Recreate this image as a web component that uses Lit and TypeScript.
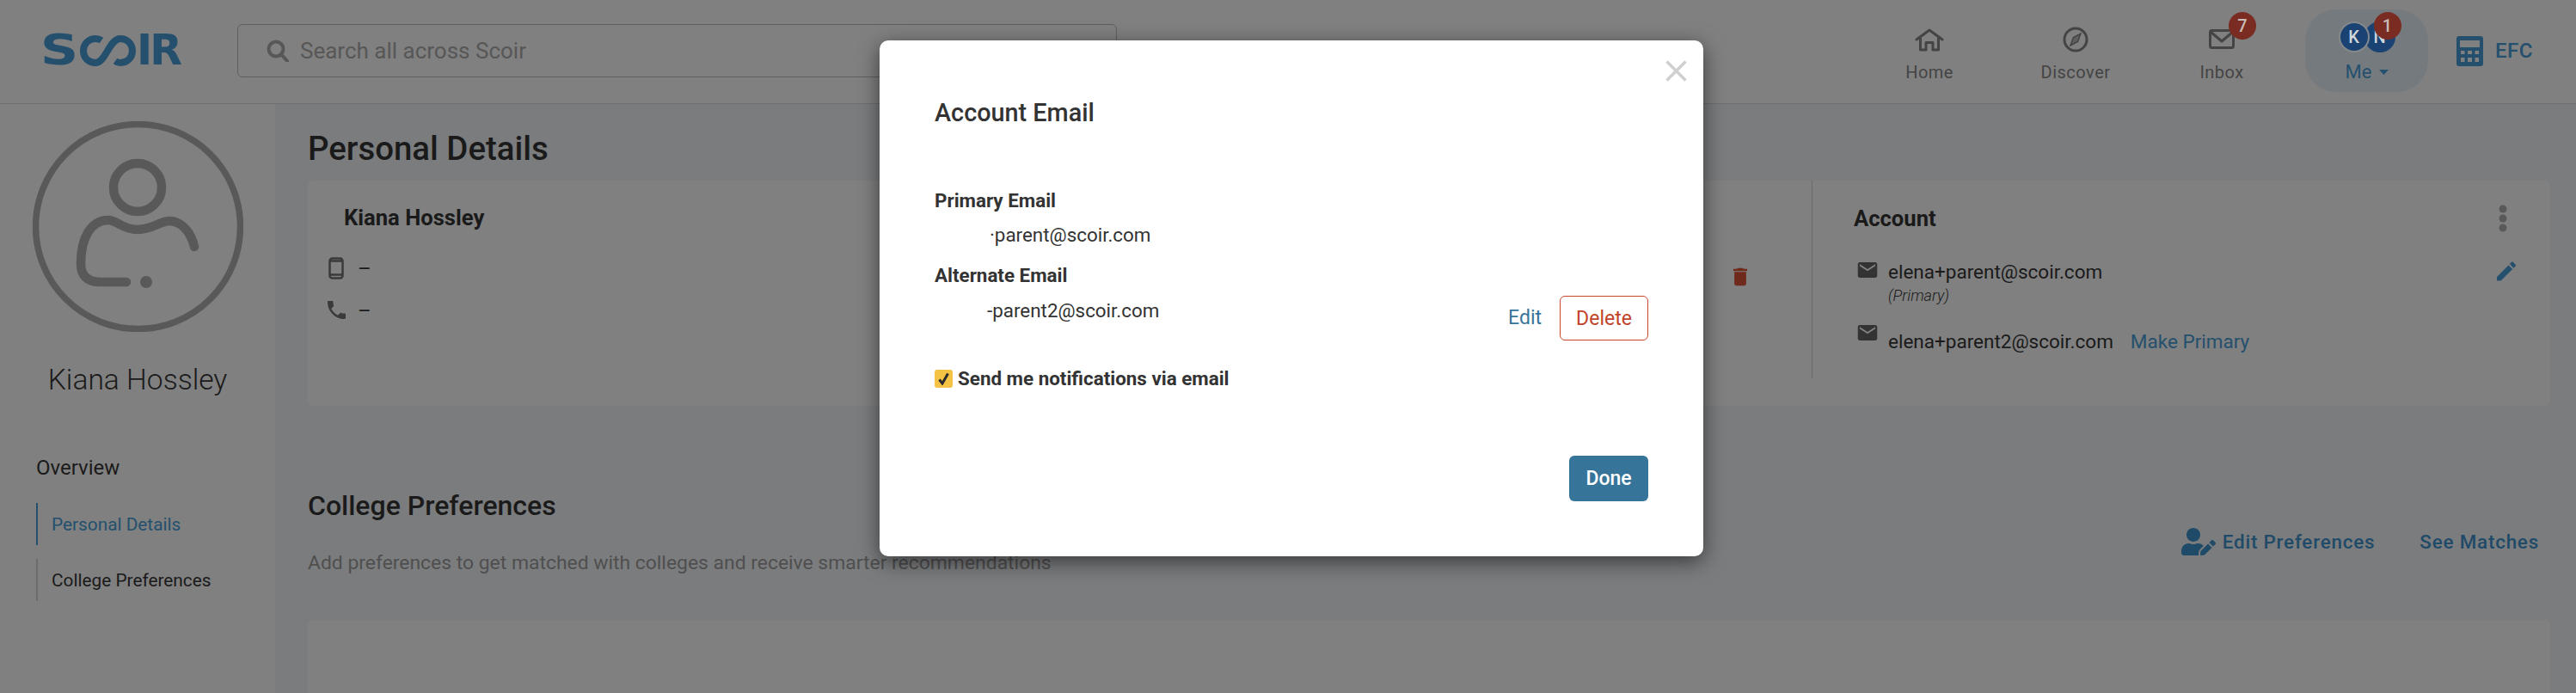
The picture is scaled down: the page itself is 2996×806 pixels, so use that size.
import { LitElement, html, css } from "lit";
import { customElement } from "lit/decorators.js";

const mailPath = "M20 4H4c-1.1 0-1.99.9-1.99 2L2 18c0 1.1.9 2 2 2h16c1.1 0 2-.9 2-2V6c0-1.1-.9-2-2-2zm0 4l-8 5-8-5V6l8 5 8-5v2z";

@customElement("app-root")
export class AppRoot extends LitElement {
  static styles = css`
    :host { display: block; position: relative; width: 2996px; height: 806px; overflow: hidden; background: #7b7c7e; font-family: Roboto, "Liberation Sans", sans-serif; color: #1a1a1a; }
    * { box-sizing: border-box; }
    svg { display: block; flex: none; }
    header { height: 121px; background: #808080; border-bottom: 1px solid #6f6f6f; display: flex; align-items: center; padding: 0 50px 2px 50px; }
    .logo { display: flex; align-items: center; width: 161px; height: 36px; color: #24506e; font: 700 49px/36px "DejaVu Sans", sans-serif; }
    .logo .s { display: block; width: 43px; margin-left: -3px; transform: scaleX(1.25); transform-origin: left center; }
    .logo svg { margin-left: 3px; }
    .logo .ir { letter-spacing: -3px; }
    .search { margin-left: 65px; width: 1023px; height: 62px; border: 1px solid #5f5f5f; border-radius: 6px; display: flex; align-items: center; padding-left: 33px; gap: 12px; color: #575757; font-size: 26px; }
    .nav { margin-left: auto; display: flex; align-items: flex-start; }
    .item { position: relative; width: 170px; height: 96px; padding-top: 21px; display: flex; flex-direction: column; align-items: center; color: #444; font-size: 20px; line-height: 24px; letter-spacing: .5px; }
    .item .ico { height: 28px; display: flex; align-items: center; }
    .item .lab { margin-top: 12px; }
    .badge { position: absolute; width: 32px; height: 32px; border-radius: 50%; background: #7a2b22; color: #c9bcb6; font-size: 20px; font-weight: 500; display: flex; align-items: center; justify-content: center; letter-spacing: 0; }
    .item .badge { left: 93px; top: 3px; }
    .me { margin-left: 12px; width: 143px; height: 96px; background: #757a7e; border-radius: 36px; padding-top: 14px; display: flex; flex-direction: column; align-items: center; color: #24506e; font-size: 22px; line-height: 24px; }
    .avs { position: relative; display: flex; }
    .av { position: relative; width: 36px; height: 36px; border-radius: 50%; background: #1a4273; border: 2px solid #83888b; color: #cfd6dc; font-size: 20px; font-weight: 500; display: flex; align-items: center; justify-content: center; }
    .av.k { z-index: 1; }
    .av.n { margin-left: -6px; border-color: transparent; }
    .avs .badge { left: 41px; top: -11px; z-index: 2; }
    .mel { margin-top: 11px; display: flex; align-items: center; gap: 8px; letter-spacing: .2px; }
    .efc { margin-left: 33px; display: flex; align-items: center; gap: 14px; color: #24506e; font-size: 24px; font-weight: 500; letter-spacing: .5px; }
    .body { display: flex; height: 685px; }
    aside { width: 320px; flex: none; background: #808080; padding-top: 20px; display: flex; flex-direction: column; }
    .bigav { margin-left: 38px; }
    .uname { margin-top: 34px; text-align: center; font-size: 33.6px; line-height: 44px; font-weight: 300; }
    .over { margin: 64px 0 0 42px; font-size: 24px; line-height: 32px; }
    .link { margin: 0 0 0 42px; height: 49px; border-left: 2px solid #6c6c6c; padding-left: 16px; display: flex; align-items: center; font-size: 20.8px; }
    .link.on { border-color: #24506e; color: #24506e; margin-top: 25px; }
    .link.off { margin-top: 16px; }
    main { flex: 1; padding: 30px 30px 0 38px; min-width: 0; }
    h2 { margin: 0; font-size: 38.4px; line-height: 44px; font-weight: 500; }
    h2.sm { font-size: 32px; }
    .card { background: #808080; border-radius: 6px; }
    .c1 { margin-top: 15px; height: 262px; display: flex; align-items: flex-start; }
    .cl { flex: 1; height: 230px; padding: 28px 75px 0 23px; border-right: 1px solid #6a6a6a; }
    .cr { width: 858px; padding: 28px 40px 0 48px; }
    .nm { font-size: 25.6px; line-height: 30px; font-weight: 700; }
    .cl .nm { margin-left: 19px; }
    .ph { display: flex; align-items: flex-start; }
    .ph.a { margin-top: 31px; }
    .ph.b { margin-top: 17px; }
    .ph .i { width: 20px; display: flex; justify-content: center; }
    .dash { margin-left: 15px; font-size: 24px; line-height: 28px; }
    .ph.b .dash { line-height: 24px; }
    .trash { margin: 12px 0 0 auto; }
    .ah { display: flex; align-items: center; justify-content: space-between; padding-right: 10px; }
    .em { display: flex; gap: 12px; align-items: flex-start; margin-left: 4px; font-size: 22.5px; line-height: 28px; }
    .em.one { margin-top: 32px; }
    .em.two { margin-top: 22px; }
    .em .mi { margin-top: 3px; }
    .em.two .mi { margin-top: 0; }
    .em.two .tx { margin-top: 5px; display: flex; gap: 20px; }
    .prim { margin-top: 2px; font-size: 18px; line-height: 24px; font-style: italic; font-weight: 300; }
    .lnk { color: #24506e; }
    .pen { margin-left: auto; margin-top: 2px; }
    .sh { margin-top: 94px; display: flex; align-items: center; justify-content: space-between; }
    .sub { margin-top: 30px; font-size: 22.9px; line-height: 30px; color: #4f4f4f; }
    .acts { display: flex; align-items: center; gap: 52px; padding: 24px 13px 0 0; color: #1f4a68; font-size: 22.4px; font-weight: 500; letter-spacing: .8px; }
    .ep { display: flex; align-items: center; gap: 8px; }
    .c2 { margin-top: 51px; height: 200px; }
    .modal { position: absolute; left: 1023px; top: 47px; width: 958px; height: 600px; background: #fff; border-radius: 10px; box-shadow: 0 6px 24px rgba(0,0,0,.55); padding: 66px 64px 64px; display: flex; flex-direction: column; color: #333; }
    .close { position: absolute; left: 914px; top: 23px; }
    .mt { font-size: 28.8px; line-height: 36px; font-weight: 500; }
    .lb { font-size: 22.4px; line-height: 28px; font-weight: 700; }
    .lb.p { margin-top: 70px; }
    .lb.q { margin-top: 19px; }
    .val { font-size: 22.4px; line-height: 28px; padding-left: 64px; margin-top: 12px; }
    .altrow { display: flex; align-items: flex-start; margin-top: 10px; }
    .altrow .val { padding-left: 61px; margin-top: 3px; }
    .edit { margin: 12px 21px 0 auto; color: #37749a; font-size: 23px; line-height: 28px; }
    .del { width: 103px; height: 52px; border: 1px solid #c8452c; border-radius: 6px; color: #c0432a; font-size: 23px; display: flex; align-items: center; justify-content: center; }
    .chk { margin-top: 33px; display: flex; align-items: center; gap: 6px; font-size: 22.4px; line-height: 22px; font-weight: 700; }
    .box { width: 21px; height: 21px; border-radius: 3px; background: #f5c344; display: flex; align-items: center; justify-content: center; }
    .done { margin: auto 0 0 auto; width: 92px; height: 53px; border-radius: 6px; background: #37749a; color: #fff; font-size: 23px; font-weight: 500; display: flex; align-items: center; justify-content: center; }
  `;

  render() {
    return html`
      <header>
        <div class="logo">
          <span class="s">S</span>
          <svg width="66" height="36" viewBox="0 0 66 36" fill="none" stroke="#24506e" stroke-width="8">
            <path d="M25 6 C23 4.6 21 4 18 4 C10 4 4 10 4 18 C4 26.5 10 32 18 32 C30 32 34 4 47 4 C55 4 61 10 61 18 C61 26 55 32 47 32 C45 32 43 31.4 41 30"/>
          </svg>
          <span class="ir">IR</span>
        </div>
        <div class="search">
          <svg width="27" height="26" viewBox="0 0 27 26" fill="none" stroke="#575757" stroke-width="4">
            <circle cx="11" cy="11" r="8.5"/><path d="M17 17 L24 25" stroke-linecap="round"/>
          </svg>
          <span>Search all across Scoir</span>
        </div>
        <nav class="nav">
          <div class="item">
            <div class="ico"><svg width="34" height="27" viewBox="0 0 34 27" fill="none" stroke="#444" stroke-width="3" stroke-linecap="round" stroke-linejoin="round">
              <path d="M2 13 L17 2 L32 13 M6.5 11 V25 H13 V16.5 H21 V25 H27.5 V11"/></svg></div>
            <span class="lab">Home</span>
          </div>
          <div class="item">
            <div class="ico"><svg width="30" height="30" viewBox="0 0 30 30" fill="none" stroke="#444" stroke-width="3">
              <circle cx="15" cy="15" r="13"/><path d="M21 8 L17.5 17.5 L9 22 L12.5 12.5 Z" stroke-width="1.5" fill="#444" fill-opacity=".55"/></svg></div>
            <span class="lab">Discover</span>
          </div>
          <div class="item">
            <div class="ico"><svg width="30" height="24" viewBox="0 0 30 24" fill="none" stroke="#444" stroke-width="3" stroke-linejoin="round">
              <rect x="1.5" y="1.5" width="27" height="20" rx="2"/><path d="M2 3 L15 14 L28 3"/></svg></div>
            <span class="lab">Inbox</span>
            <span class="badge">7</span>
          </div>
        </nav>
        <div class="me">
          <div class="avs">
            <span class="av k">K</span><span class="av n">N</span>
            <span class="badge">1</span>
          </div>
          <div class="mel">Me <svg width="11" height="6" viewBox="0 0 11 6"><path d="M0 0 H11 L5.5 6 Z" fill="#24506e"/></svg></div>
        </div>
        <div class="efc">
          <svg width="31" height="35" viewBox="0 0 31 35">
            <path fill="#24506e" fill-rule="evenodd" d="M3 0 H28 a3 3 0 0 1 3 3 V32 a3 3 0 0 1 -3 3 H3 a3 3 0 0 1 -3 -3 V3 a3 3 0 0 1 3 -3Z M4 5 V13 H27 V5Z M5 17 V21 H9.500 V17Z M13 17 V21 H18 V17Z M21.500 17 V21 H26 V17Z M5 25 V30 H9.500 V25Z M13 25 V30 H18 V25Z M21.500 25 V30 H26 V25Z"/>
          </svg>
          <span>EFC</span>
        </div>
      </header>
      <div class="body">
        <aside>
          <svg class="bigav" width="245" height="245" viewBox="0 0 245 245" fill="none" stroke="#595959" stroke-linecap="round">
            <circle cx="122.500" cy="122.500" r="119" stroke-width="7.500"/>
            <circle cx="122" cy="77" r="28" stroke-width="10.500"/>
            <path stroke-width="10.500" d="M188 146 C184 128 172 116 159 116 C148 116 140 126 122 126 C104 126 98 115 88 115 C68 115 56 135 56 166 C56 180 64 187 79 187 L109 187"/>
            <circle cx="132" cy="187" r="7" fill="#595959" stroke="none"/>
          </svg>
          <div class="uname">Kiana Hossley</div>
          <div class="over">Overview</div>
          <div class="link on">Personal Details</div>
          <div class="link off">College Preferences</div>
        </aside>
        <main>
          <h2>Personal Details</h2>
          <section class="card c1">
            <div class="cl">
              <div class="nm">Kiana Hossley</div>
              <div class="ph a">
                <span class="i"><svg width="18" height="26" viewBox="0 0 18 26" fill="none" stroke="#3a3a3a" stroke-width="2.500"><rect x="1.500" y="1.500" width="15" height="23" rx="3"/><path d="M2 4.500 H16 M2 20.500 H16"/></svg></span>
                <span class="dash">–</span>
                <svg class="trash" width="16" height="22" viewBox="5 3 14 18"><path fill="#6e2a1a" d="M6 19c0 1.100.900 2 2 2h8c1.100 0 2-.900 2-2V7H6v12zM19 4h-3.500l-1-1h-5l-1 1H5v2h14V4z"/></svg>
              </div>
              <div class="ph b">
                <span class="i"><svg width="21" height="21" viewBox="3 3 18 18"><path fill="#3a3a3a" d="M6.620 10.790c1.440 2.830 3.760 5.140 6.590 6.590l2.200-2.200c.27-.27.67-.36 1.020-.24 1.120.37 2.330.57 3.570.57.55 0 1 .45 1 1V20c0 .55-.45 1-1 1-9.390 0-17-7.610-17-17 0-.55.45-1 1-1h3.500c.55 0 1 .45 1 1 0 1.250.2 2.450.57 3.570.11.35.03.74-.25 1.020l-2.200 2.200z"/></svg></span>
                <span class="dash">–</span>
              </div>
            </div>
            <div class="cr">
              <div class="ah">
                <span class="nm">Account</span>
                <svg width="10" height="32" viewBox="0 0 10 32" fill="#595959"><circle cx="5" cy="5" r="4.500"/><circle cx="5" cy="16" r="4.500"/><circle cx="5" cy="27" r="4.500"/></svg>
              </div>
              <div class="em one">
                <svg class="mi" width="24" height="18" viewBox="2 4 20 16"><path fill="#333" d="${mailPath}"/></svg>
                <div class="tx"><div>elena+parent@scoir.com</div><div class="prim">(Primary)</div></div>
                <svg class="pen" width="22" height="23" viewBox="3 3 18 18"><path fill="#24506e" d="M3 17.250V21h3.750L17.810 9.940l-3.750-3.750L3 17.250zM20.710 7.040c.39-.39.39-1.020 0-1.410l-2.340-2.340c-.39-.39-1.020-.39-1.410 0l-1.830 1.830 3.750 3.750 1.830-1.830z"/></svg>
              </div>
              <div class="em two">
                <svg class="mi" width="24" height="18" viewBox="2 4 20 16"><path fill="#333" d="${mailPath}"/></svg>
                <div class="tx"><span>elena+parent2@scoir.com</span><span class="lnk">Make Primary</span></div>
              </div>
            </div>
          </section>
          <section class="sh">
            <div>
              <h2 class="sm">College Preferences</h2>
              <div class="sub">Add preferences to get matched with colleges and receive smarter recommendations</div>
            </div>
            <div class="acts">
              <span class="ep">
                <svg width="40" height="32" viewBox="0 0 640 512"><path fill="#1f4a68" d="M224 256c70.700 0 128-57.300 128-128S294.700 0 224 0 96 57.300 96 128s57.300 128 128 128zm89.600 32h-16.700c-22.200 10.200-46.900 16-72.900 16s-50.600-5.800-72.900-16h-16.700C60.200 288 0 348.200 0 422.400V464c0 26.500 21.500 48 48 48h274.900c-2.400-6.800-3.400-14-2.600-21.300l6.800-60.900 1.200-11.100 7.900-7.900 77.300-77.300c-24.500-27.700-60-45.500-99.900-45.500zm45.300 145.300l-6.800 61c-1.100 10.200 7.500 18.800 17.600 17.600l60.900-6.800 137.900-137.900-71.700-71.700-137.900 137.800zM633 268.900L595.100 231c-9.300-9.300-24.500-9.300-33.800 0l-37.800 37.800-4.100 4.100 71.800 71.700 41.800-41.800c9.300-9.400 9.300-24.500 0-33.900z"/></svg>
                Edit Preferences
              </span>
              <span>See Matches</span>
            </div>
          </section>
          <section class="card c2"></section>
        </main>
      </div>
      <div class="modal" role="dialog">
        <svg class="close" width="25" height="25" viewBox="0 0 25 25" stroke="#cfcfcf" stroke-width="3.500"><path d="M1.500 1.500 L23.500 23.500 M23.500 1.500 L1.500 23.500"/></svg>
        <div class="mt">Account Email</div>
        <div class="lb p">Primary Email</div>
        <div class="val">·parent@scoir.com</div>
        <div class="lb q">Alternate Email</div>
        <div class="altrow">
          <div class="val">-parent2@scoir.com</div>
          <span class="edit">Edit</span>
          <span class="del">Delete</span>
        </div>
        <div class="chk">
          <span class="box"><svg width="13" height="15" viewBox="0 0 13 15" fill="none" stroke="#2b2b2b" stroke-width="3"><path d="M1.500 8.500 L5 13 L11.500 1.500"/></svg></span>
          Send me notifications via email
        </div>
        <div class="done">Done</div>
      </div>
    `;
  }
}
